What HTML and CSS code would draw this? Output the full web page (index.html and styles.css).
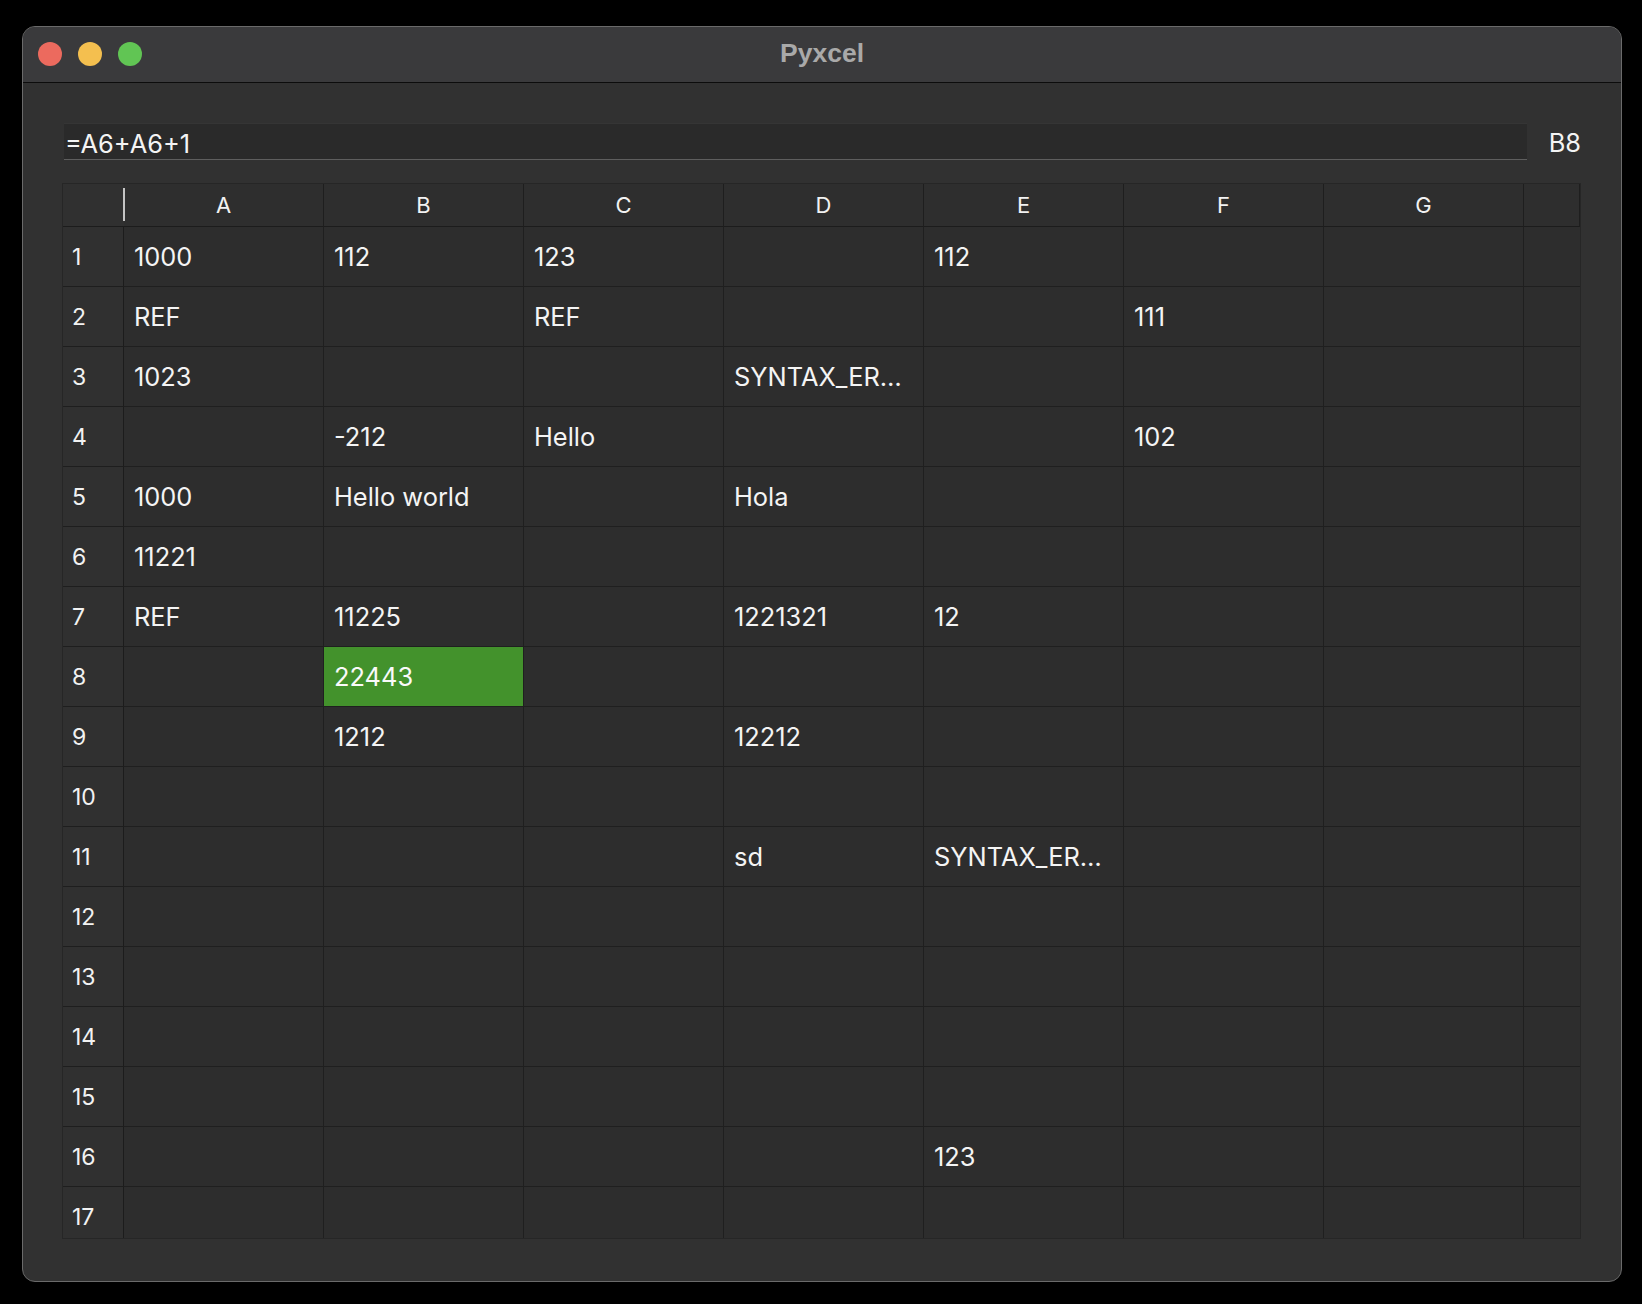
FILE: index.html
```html
<!DOCTYPE html>
<html>
<head>
<meta charset="utf-8">
<link rel="stylesheet" href="styles.css">
</head>
<body>
<div class="window">
  <div class="titlebar">
    <div class="lights">
      <span class="light red"></span>
      <span class="light yellow"></span>
      <span class="light green"></span>
    </div>
    <div class="title">Pyxcel</div>
  </div>
  <div class="content">
    <div class="formula-row">
      <div class="formula">=A6+A6+1</div>
      <div class="cellref">B8</div>
    </div>
    <div class="sheet">
      <div class="hd corner"></div><div class="hd">A</div><div class="hd">B</div><div class="hd">C</div><div class="hd">D</div><div class="hd">E</div><div class="hd">F</div><div class="hd">G</div><div class="hd"></div>

      <div class="rh">1</div><div class="c">1000</div><div class="c">112</div><div class="c">123</div><div class="c"></div><div class="c">112</div><div class="c"></div><div class="c"></div><div class="c"></div>
      <div class="rh">2</div><div class="c">REF</div><div class="c"></div><div class="c">REF</div><div class="c"></div><div class="c"></div><div class="c">111</div><div class="c"></div><div class="c"></div>
      <div class="rh">3</div><div class="c">1023</div><div class="c"></div><div class="c"></div><div class="c">SYNTAX_ER…</div><div class="c"></div><div class="c"></div><div class="c"></div><div class="c"></div>
      <div class="rh">4</div><div class="c"></div><div class="c">-212</div><div class="c">Hello</div><div class="c"></div><div class="c"></div><div class="c">102</div><div class="c"></div><div class="c"></div>
      <div class="rh">5</div><div class="c">1000</div><div class="c">Hello world</div><div class="c"></div><div class="c">Hola</div><div class="c"></div><div class="c"></div><div class="c"></div><div class="c"></div>
      <div class="rh">6</div><div class="c">11221</div><div class="c"></div><div class="c"></div><div class="c"></div><div class="c"></div><div class="c"></div><div class="c"></div><div class="c"></div>
      <div class="rh">7</div><div class="c">REF</div><div class="c">11225</div><div class="c"></div><div class="c">1221321</div><div class="c">12</div><div class="c"></div><div class="c"></div><div class="c"></div>
      <div class="rh">8</div><div class="c"></div><div class="c selected">22443</div><div class="c"></div><div class="c"></div><div class="c"></div><div class="c"></div><div class="c"></div><div class="c"></div>
      <div class="rh">9</div><div class="c"></div><div class="c">1212</div><div class="c"></div><div class="c">12212</div><div class="c"></div><div class="c"></div><div class="c"></div><div class="c"></div>
      <div class="rh">10</div><div class="c"></div><div class="c"></div><div class="c"></div><div class="c"></div><div class="c"></div><div class="c"></div><div class="c"></div><div class="c"></div>
      <div class="rh">11</div><div class="c"></div><div class="c"></div><div class="c"></div><div class="c">sd</div><div class="c">SYNTAX_ER…</div><div class="c"></div><div class="c"></div><div class="c"></div>
      <div class="rh">12</div><div class="c"></div><div class="c"></div><div class="c"></div><div class="c"></div><div class="c"></div><div class="c"></div><div class="c"></div><div class="c"></div>
      <div class="rh">13</div><div class="c"></div><div class="c"></div><div class="c"></div><div class="c"></div><div class="c"></div><div class="c"></div><div class="c"></div><div class="c"></div>
      <div class="rh">14</div><div class="c"></div><div class="c"></div><div class="c"></div><div class="c"></div><div class="c"></div><div class="c"></div><div class="c"></div><div class="c"></div>
      <div class="rh">15</div><div class="c"></div><div class="c"></div><div class="c"></div><div class="c"></div><div class="c"></div><div class="c"></div><div class="c"></div><div class="c"></div>
      <div class="rh">16</div><div class="c"></div><div class="c"></div><div class="c"></div><div class="c"></div><div class="c">123</div><div class="c"></div><div class="c"></div><div class="c"></div>
      <div class="rh">17</div><div class="c"></div><div class="c"></div><div class="c"></div><div class="c"></div><div class="c"></div><div class="c"></div><div class="c"></div><div class="c"></div>
    </div>
  </div>
</div>
</body>
</html>
```

FILE: styles.css
```css
* { box-sizing: border-box; }

html, body {
  margin: 0;
  padding: 0;
  background: #000;
}

body {
  padding: 26px 0 0 22px;
  font-family: Inter, "Liberation Sans", sans-serif;
  color: #ececec;
}

.window {
  width: 1600px;
  height: 1256px;
  border: 1px solid #6a6a6a;
  border-radius: 13px;
  overflow: hidden;
  background: #313131;
  display: flex;
  flex-direction: column;
}

.titlebar {
  height: 56px;
  flex: none;
  background: #3a3a3c;
  border-bottom: 1px solid #0c0c0c;
  display: flex;
  align-items: center;
  justify-content: center;
  position: relative;
}

.lights {
  position: absolute;
  left: 15px;
  top: 15px;
  display: flex;
  gap: 16px;
}

.light {
  width: 24px;
  height: 24px;
  border-radius: 50%;
  display: block;
}
.red { background: #ec6a5e; }
.yellow { background: #f4bf4f; }
.green { background: #61c554; }

.title {
  font-family: "Liberation Sans", Arial, sans-serif;
  font-weight: bold;
  font-size: 26.5px;
  color: #a9a9a9;
  margin-top: -2px;
}

.content {
  flex: 1;
  padding: 40px 40px 0 41px;
  display: flex;
  flex-direction: column;
}

.formula-row {
  display: flex;
  align-items: center;
  gap: 21px;
  height: 37px;
}

.formula {
  flex: 1;
  height: 37px;
  background: #2a2a2a;
  border-top: 1px solid #353535;
  border-bottom: 1px solid #5e5e5e;
  font-size: 25.4px;
  line-height: 35px;
  padding-top: 2px;
  padding-left: 1px;
  color: #f4f4f4;
}

.cellref {
  font-size: 25.4px;
  color: #f4f4f4;
  width: 33px;
  text-align: right;
  padding-top: 2px;
}

.sheet {
  margin-top: 23px;
  margin-left: -2px;
  height: 1056px;
  overflow: hidden;
  border: 1px solid #262626;
  display: grid;
  grid-template-columns: 61px repeat(7, 200px) 1fr;
  grid-template-rows: 43px;
  grid-auto-rows: 60px;
  background: #2d2d2d;
}

.hd {
  background: #2e2e2e;
  border-right: 1px solid #1e1e1e;
  border-bottom: 1px solid #1c1c1c;
  font-size: 22px;
  display: flex;
  align-items: center;
  justify-content: center;
  color: #f2f2f2;
}

.hd:last-child { border-right: none; }

.corner {
  position: relative;
  border-right: none;
  background: #303030;
}
.corner::after {
  content: "";
  position: absolute;
  right: -1px;
  top: 4px;
  bottom: 5px;
  width: 2px;
  background: #c4c4c4;
}

.rh {
  background: #303030;
  border-right: 1px solid #1c1c1c;
  border-bottom: 1px solid #1e1e1e;
  font-size: 23px;
  display: flex;
  align-items: center;
  padding-left: 9px;
  color: #f2f2f2;
}

.c {
  border-right: 1px solid #1f1f1f;
  border-bottom: 1px solid #1f1f1f;
  font-size: 25.4px;
  display: flex;
  align-items: center;
  padding-left: 10px;
  white-space: nowrap;
  overflow: hidden;
  color: #f4f4f4;
}

.c:nth-child(9n) { border-right: none; }

.selected {
  background: #43922c;
  color: #fafafa;
}
```
